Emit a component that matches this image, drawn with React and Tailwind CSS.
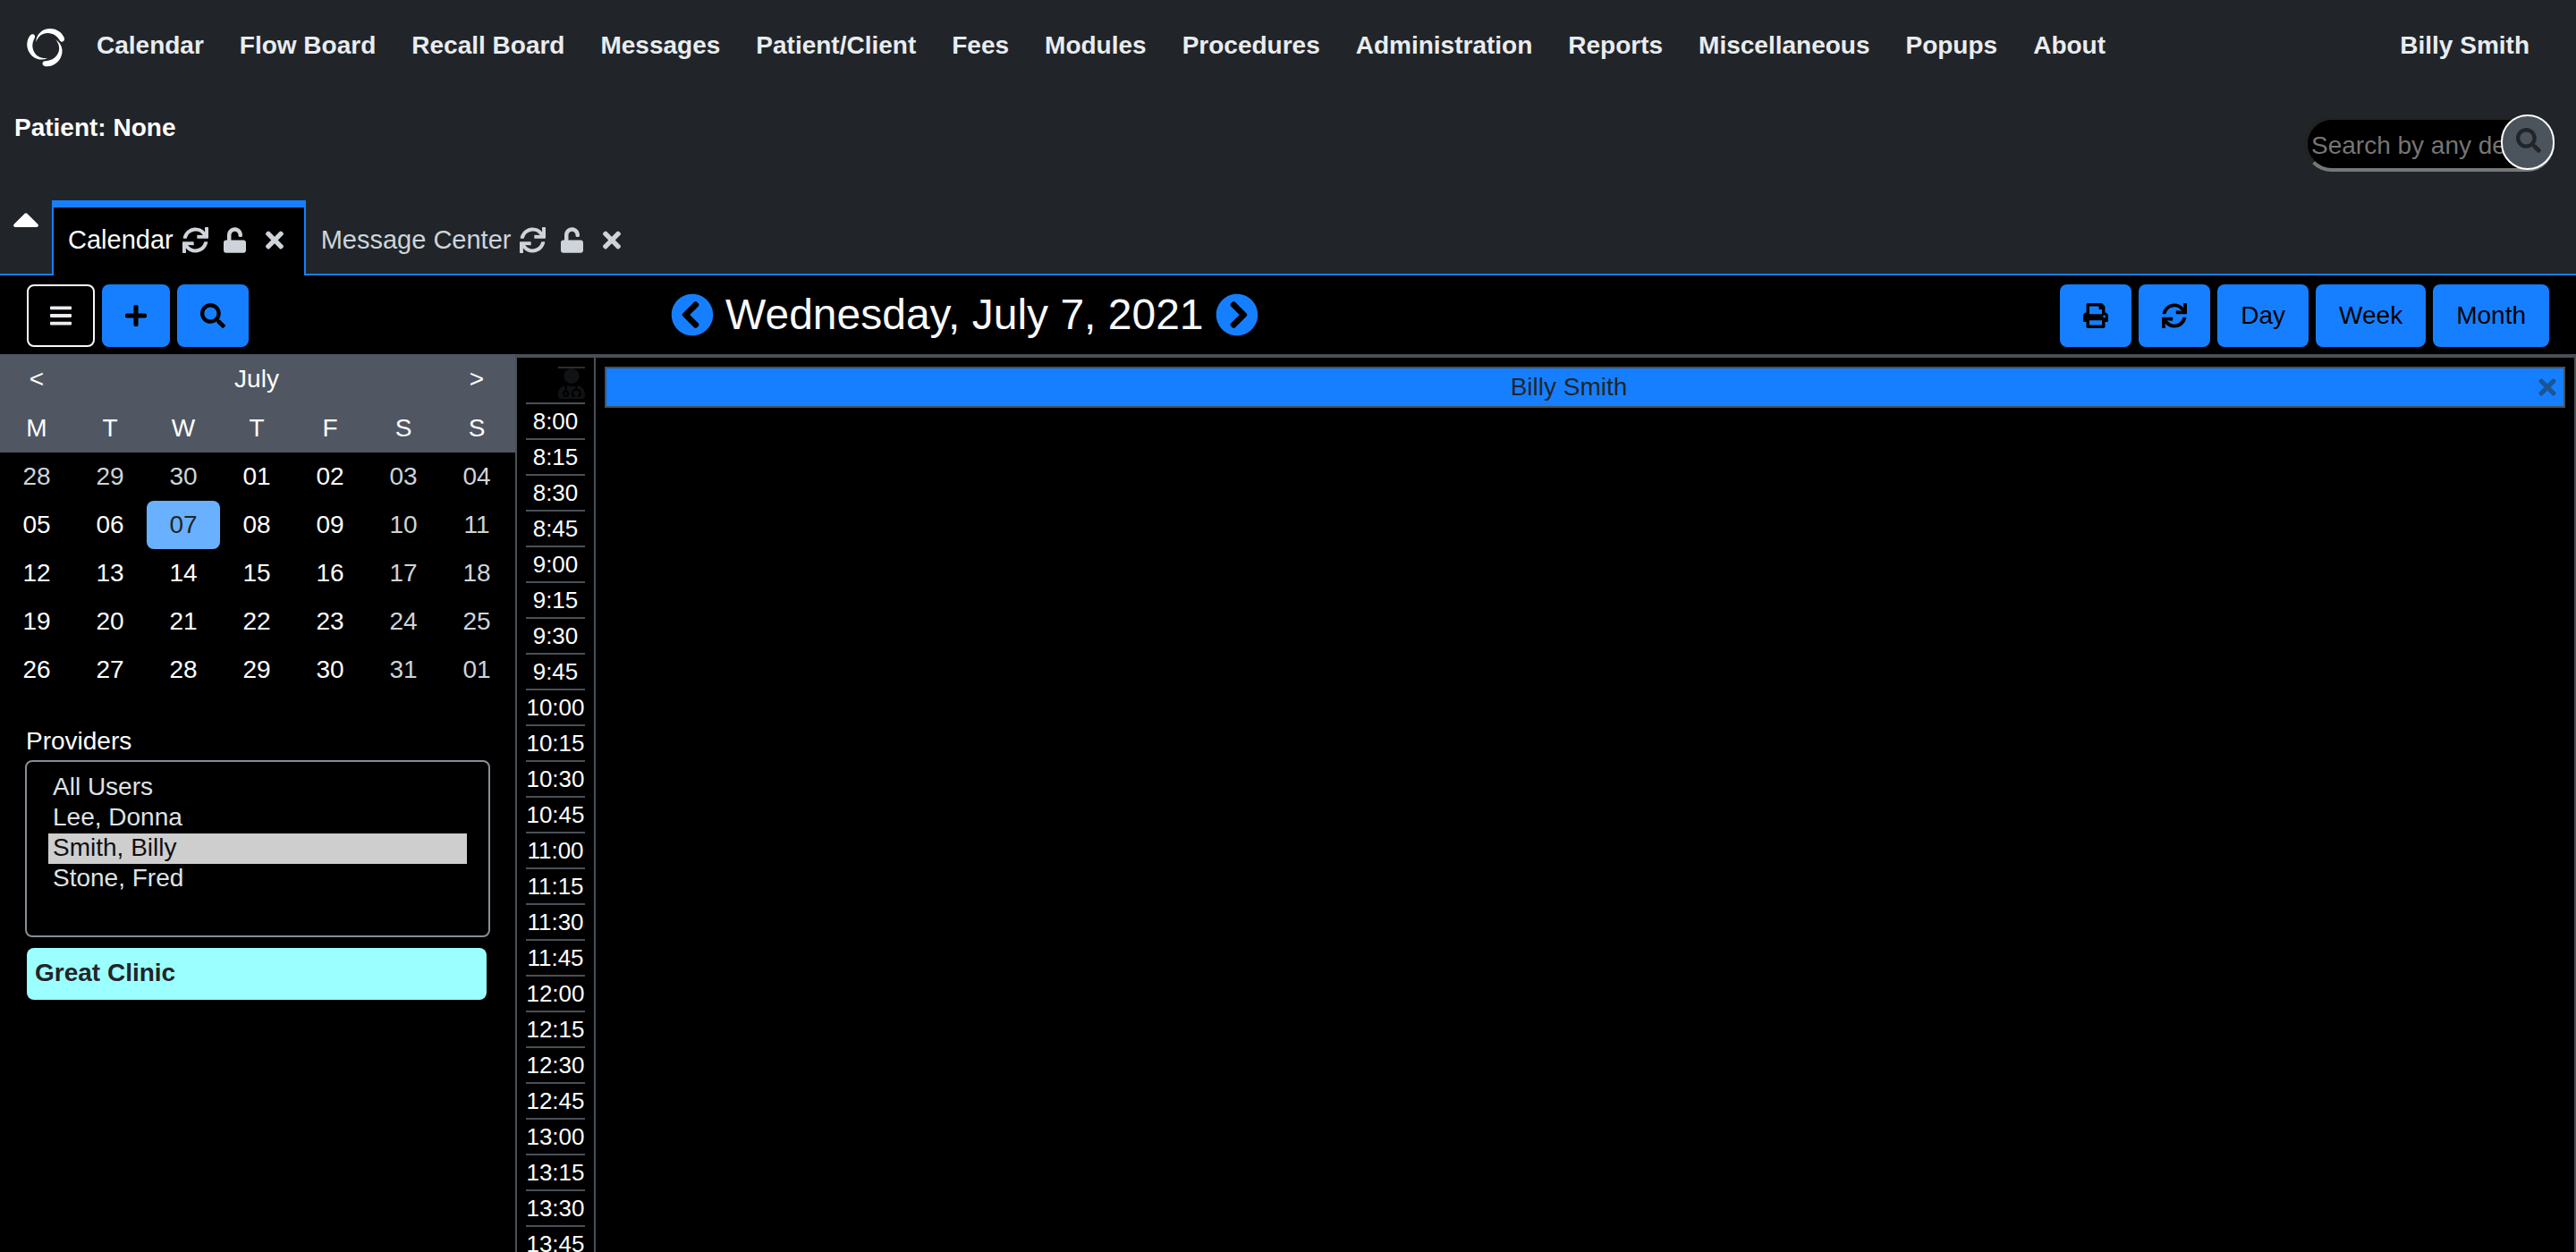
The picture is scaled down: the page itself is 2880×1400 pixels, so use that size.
import {
  FaBars,
  FaCaretUp,
  FaChevronCircleLeft,
  FaChevronCircleRight,
  FaPlus,
  FaPrint,
  FaSearch,
  FaSync,
  FaTimes,
  FaUnlock,
  FaUserMd,
} from "react-icons/fa";

const menu = [
  "Calendar",
  "Flow Board",
  "Recall Board",
  "Messages",
  "Patient/Client",
  "Fees",
  "Modules",
  "Procedures",
  "Administration",
  "Reports",
  "Miscellaneous",
  "Popups",
  "About",
];

const weekdays = ["M", "T", "W", "T", "F", "S", "S"];

const weeks = [
  ["28", "29", "30", "01", "02", "03", "04"],
  ["05", "06", "07", "08", "09", "10", "11"],
  ["12", "13", "14", "15", "16", "17", "18"],
  ["19", "20", "21", "22", "23", "24", "25"],
  ["26", "27", "28", "29", "30", "31", "01"],
];

const times = [];
for (let hour = 8; hour < 14; hour++) {
  for (const minute of ["00", "15", "30", "45"]) times.push(`${hour}:${minute}`);
}

const providers = ["All Users", "Lee, Donna", "Smith, Billy", "Stone, Fred"];

const blueButton =
  "flex h-[70px] items-center justify-center rounded-lg bg-[#167fff] px-[26px] text-black";

function Logo() {
  const blade =
    "M8.2 15C8.6 6 15.5 0 24 0C32 0 38 5 40 10.8C40.8 14.6 36.6 16 34.8 13.2C31.5 8 27.5 5.2 21.5 5C15.5 4.8 10.8 8.4 8.2 15Z";
  return (
    <svg viewBox="0 0 40 40" className="h-10 w-10 overflow-visible fill-white" aria-hidden="true">
      <path d={blade} />
      <path d={blade} transform="rotate(120 20 20)" />
      <path d={blade} transform="rotate(240 20 20)" />
    </svg>
  );
}

function TabActions({ name }) {
  return (
    <>
      <button aria-label={`Reload ${name}`} className="ml-2.5">
        <FaSync className="h-[29px] w-[29px]" />
      </button>
      <button aria-label={`Lock ${name}`} className="ml-[17px]">
        <FaUnlock className="h-[29px] w-[25px]" />
      </button>
      <button aria-label={`Close ${name}`} className="ml-[22px]">
        <FaTimes className="h-[29px] w-5" />
      </button>
    </>
  );
}

function Header() {
  return (
    <header className="shrink-0 bg-[#212529]">
      <nav className="flex items-center pt-8 pr-[52px] pl-8 leading-[38px] font-bold text-[#e9ecef]">
        <a href="#home" aria-label="Home">
          <Logo />
        </a>
        <ul className="ml-9 flex gap-10 pb-0.5">
          {menu.map((item) => (
            <li key={item}>
              <a href="#menu">{item}</a>
            </li>
          ))}
        </ul>
        <a href="#user" className="ml-auto pb-0.5">
          Billy Smith
        </a>
      </nav>

      <div className="flex items-start justify-between pt-14 pr-6 pl-4">
        <div className="leading-[29px] font-bold text-white">Patient: None</div>
        <form className="relative">
          <input
            type="text"
            aria-label="Search by any demographics"
            placeholder="Search by any demographics"
            className="mt-0.5 block h-[62px] w-[280px] rounded-full border-4 border-t-[#222222] border-r-[#777777] border-b-[#777777] border-l-[#222222] bg-black px-1 pt-1 text-white placeholder:text-[#757575]"
          />
          <button
            type="button"
            aria-label="Search"
            className="absolute top-0 right-0 flex h-[62px] w-[60px] items-center justify-center rounded-full border-2 border-white bg-[#4b545c] pb-1 pl-0.5 text-[#212529]"
          >
            <FaSearch className="h-7 w-7" />
          </button>
        </form>
      </div>

      <div className="flex items-end pt-8 text-[29px]">
        <button
          aria-label="Collapse header"
          className="flex h-[84px] w-[58px] items-center justify-center border-b-2 border-[#167fff] pb-10 text-white"
        >
          <FaCaretUp className="h-12 w-[30px]" />
        </button>
        <div className="flex h-[84px] items-center border-x-2 border-t-8 border-[#167fff] bg-black pr-[23px] pb-1 pl-4 text-[#ced4da]">
          <a href="#calendar" className="text-white">
            Calendar
          </a>
          <TabActions name="Calendar" />
        </div>
        <div className="flex h-[84px] grow items-center border-b-2 border-[#167fff] pt-1.5 pl-[17px] text-[#ced4da]">
          <a href="#messages">Message Center</a>
          <TabActions name="Message Center" />
        </div>
      </div>
    </header>
  );
}

function Toolbar() {
  return (
    <div className="flex h-[88px] shrink-0 items-center px-[30px] pt-0.5">
      <div className="flex w-[720px] shrink-0 gap-2">
        <button
          aria-label="Toggle sidebar"
          className="flex h-[70px] items-center justify-center rounded-lg border-2 border-[#f8f9fa] px-6 text-[#e9ecef]"
        >
          <FaBars className="h-7 w-6" />
        </button>
        <button aria-label="Add event" className={blueButton}>
          <FaPlus className="h-7 w-6" />
        </button>
        <button aria-label="Search events" className={blueButton}>
          <FaSearch className="h-7 w-7" />
        </button>
      </div>
      <div className="flex items-center gap-[13px] pb-0.5">
        <button aria-label="Previous day" className="text-[#167fff]">
          <FaChevronCircleLeft className="h-12 w-12" />
        </button>
        <h1 className="text-[48px] leading-[56px] text-[#f8f9fa]">Wednesday, July 7, 2021</h1>
        <button aria-label="Next day" className="text-[#167fff]">
          <FaChevronCircleRight className="h-12 w-12" />
        </button>
      </div>
      <div className="ml-auto flex gap-2">
        <button aria-label="Print" className={blueButton}>
          <FaPrint className="h-7 w-7" />
        </button>
        <button aria-label="Refresh" className={blueButton}>
          <FaSync className="h-7 w-7" />
        </button>
        <button className={blueButton}>Day</button>
        <button className={blueButton}>Week</button>
        <button className={blueButton}>Month</button>
      </div>
    </div>
  );
}

function MonthPicker() {
  return (
    <div className="bg-[linear-gradient(#505762,#505762)] bg-[length:100%_110px] bg-no-repeat pr-0.5">
      <table className="w-full table-fixed border-collapse text-center text-white">
        <thead>
          <tr className="h-[55px]">
            <th className="p-0 font-normal">
              <button aria-label="Previous month">&lt;</button>
            </th>
            <th colSpan={5} className="p-0 font-normal">
              July
            </th>
            <th className="p-0 font-normal">
              <button aria-label="Next month">&gt;</button>
            </th>
          </tr>
          <tr className="h-[55px]">
            {weekdays.map((day, i) => (
              <th key={i} className="p-0 font-normal">
                {day}
              </th>
            ))}
          </tr>
        </thead>
        <tbody>
          {weeks.map((week, row) => (
            <tr key={row} className="h-[54px]">
              {week.map((day, col) => {
                const selected = row === 1 && col === 2;
                const muted = col > 4 || (row === 0 && col < 3);
                const tone = selected
                  ? "rounded-lg bg-[#69b1ff] text-[#212529]"
                  : muted
                    ? "text-[#ced4da]"
                    : "text-white";
                return (
                  <td key={col} className="p-0">
                    <button className={`block h-[54px] w-full ${tone}`}>{day}</button>
                  </td>
                );
              })}
            </tr>
          ))}
        </tbody>
      </table>
    </div>
  );
}

function Sidebar() {
  return (
    <aside className="w-[576px] shrink-0">
      <MonthPicker />
      <div className="px-7 pt-8">
        <label htmlFor="providers" className="block pl-px leading-[42px] text-white">
          Providers
        </label>
        <select
          id="providers"
          multiple
          defaultValue={["Smith, Billy"]}
          className="block h-[198px] w-full overflow-hidden rounded-lg border-2 border-[#868e96] bg-black px-6 py-3 text-[#dee2e6]"
        >
          {providers.map((name) => (
            <option key={name} className="h-[34px] px-[5px] py-0 leading-[34px]">
              {name}
            </option>
          ))}
        </select>
        <div className="mt-3 mr-1 ml-0.5 rounded-lg bg-[#9cffff] px-[9px] pt-2 pb-2.5 leading-10 font-bold text-[#212529]">
          Great Clinic
        </div>
      </div>
    </aside>
  );
}

function DayView() {
  return (
    <main className="flex grow border-t-4 border-[#495057]">
      <div className="w-[90px] shrink-0 border-x-2 border-[#495057] px-2.5 pt-2.5 text-[26px] text-white">
        <div className="flex h-10 justify-end">
          <div className="border-t-2 border-[#2b2e32] text-[#111213]">
            <FaUserMd className="h-[34px] w-[30px]" />
          </div>
        </div>
        {times.map((time) => (
          <div
            key={time}
            className="h-10 border-t-2 border-[#495057] text-center leading-[38px]"
          >
            {time}
          </div>
        ))}
      </div>
      <div className="grow border-r-2 border-[#495057] px-2.5 pt-2.5">
        <div className="flex h-[46px] items-center border-2 border-[#495057] bg-[#167fff] pr-2 text-[#212529]">
          <span className="grow pr-2 text-center">Billy Smith</span>
          <button aria-label="Close Billy Smith" className="text-[#1b5594]">
            <FaTimes className="h-7 w-5" />
          </button>
        </div>
      </div>
    </main>
  );
}

export default function App() {
  return (
    <div className="flex h-screen flex-col overflow-hidden bg-black font-['Liberation_Sans',Arial,sans-serif] text-[28px] leading-9">
      <Header />
      <Toolbar />
      <div className="flex min-h-0 grow overflow-hidden">
        <Sidebar />
        <DayView />
      </div>
    </div>
  );
}
